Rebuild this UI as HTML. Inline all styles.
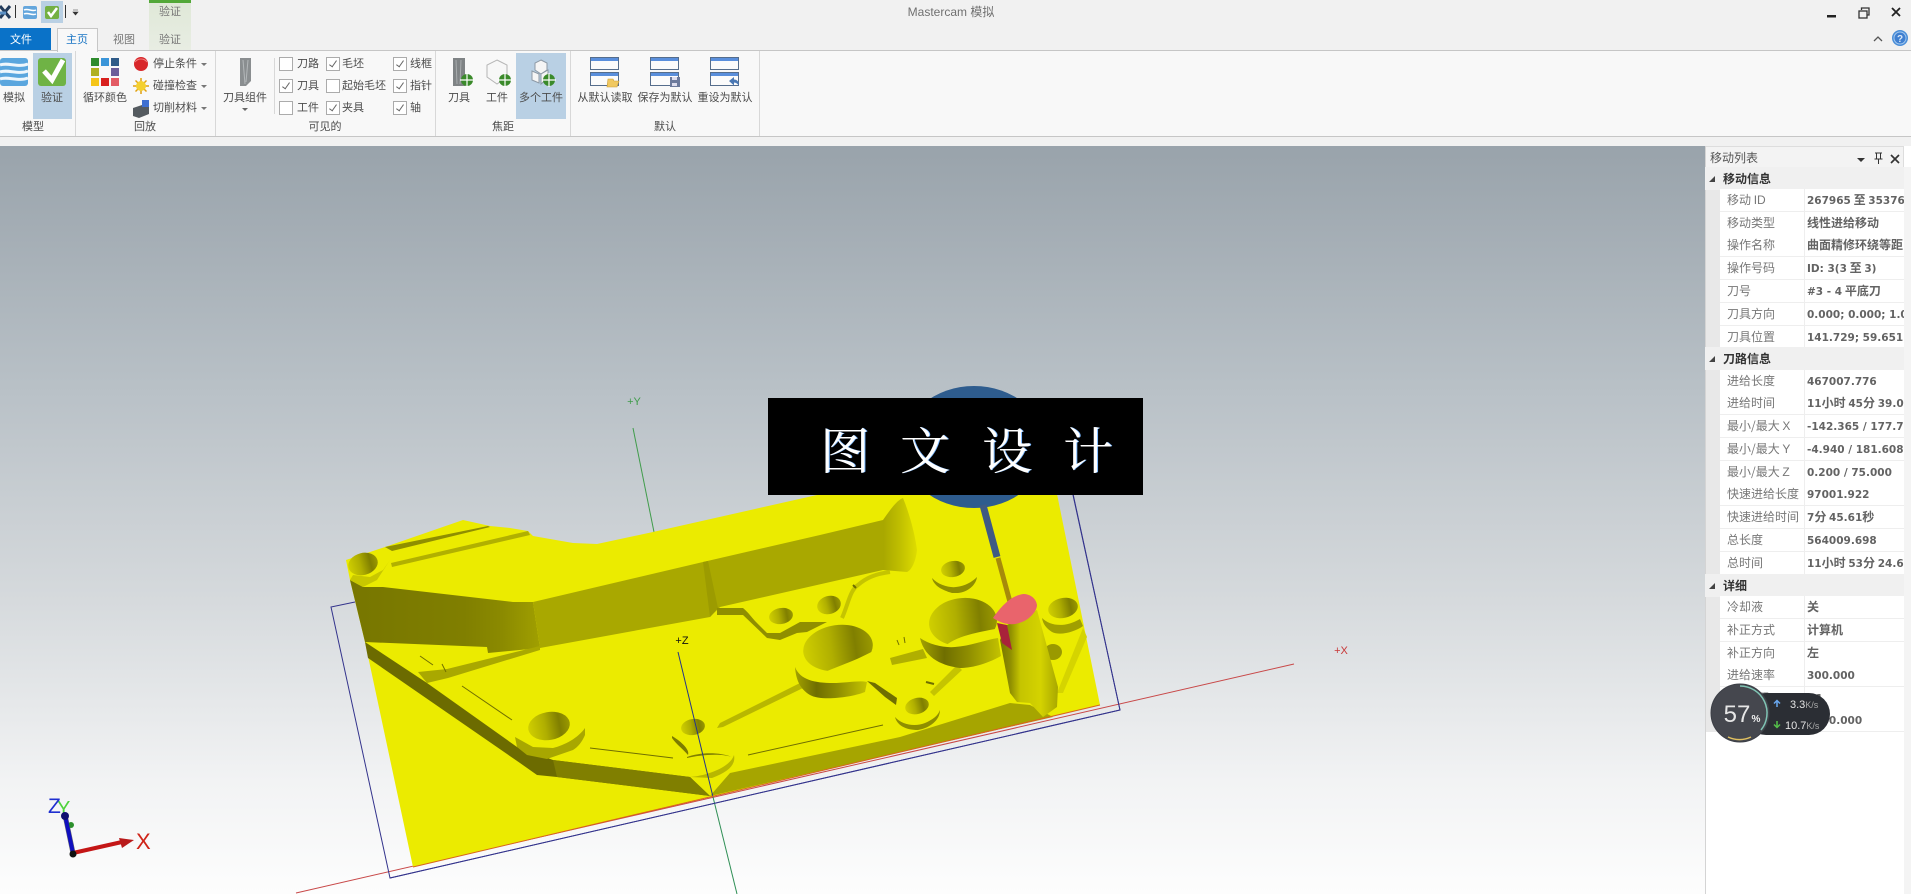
<!DOCTYPE html>
<html lang="zh"><head><meta charset="utf-8"><title>Mastercam 模拟</title>
<style>
html,body{margin:0;padding:0;width:1911px;height:894px;overflow:hidden;background:#f1f1f1}
body{position:relative;font:11px "Liberation Sans","Noto Sans CJK SC",sans-serif;color:#4a4a4a}
.a{position:absolute;white-space:nowrap}
.t{position:absolute;white-space:nowrap;transform:translate(-50%,-50%);font-size:11px;line-height:14px;color:#4c4c4c}
.l{position:absolute;white-space:nowrap;transform:translateY(-50%);font-size:11px;line-height:14px;color:#4c4c4c}
#ribbon{position:absolute;left:0;top:50px;width:1911px;height:87px;background:#f8f8f8;border-top:1px solid #c6c6c6;border-bottom:1px solid #c6c6c6;box-sizing:border-box}
.sep{position:absolute;width:1px;background:#d8d8d8}
.cb{position:absolute;width:12px;height:12px;border:1px solid #ababab;background:#fff;transform:translateY(-50%)}
.cb.c::after{content:"";position:absolute;left:4px;top:1px;width:3px;height:7px;border:solid #666;border-width:0 1.5px 1.5px 0;transform:rotate(35deg)}
#panel{position:absolute;left:1705px;top:146px;width:206px;height:748px;background:#fff}
.g{position:absolute;left:0;width:199px;height:23px;background:#f0f0f0;font:bold 12px/23px "Noto Sans CJK SC",sans-serif;color:#333;padding-left:18px;box-sizing:border-box}
.g::before{content:"";position:absolute;left:4px;top:9px;border-style:solid;border-width:0 0 6px 6px;border-color:transparent transparent #444 transparent}
.r{position:absolute;left:15px;width:184px;height:22px;background:#fff;border-bottom:1px solid #eee;overflow:hidden;white-space:nowrap;font-size:12px;line-height:22px}
.r s{position:absolute;left:7px;text-decoration:none;color:#777;font:12px/22px "Noto Sans CJK SC",sans-serif}
.r s i{font:12px "Liberation Sans",sans-serif;font-style:normal}
.r b{position:absolute;left:87px;color:#636363;font:bold 12px/22px "Noto Sans CJK SC",sans-serif}
.r b i{font:bold 10.5px "DejaVu Sans",sans-serif;font-style:normal}
.r::before{content:"";position:absolute;left:84px;top:0;width:1px;height:22px;background:#eee}
.wm{position:absolute;color:#fff;font:50px/50px "Noto Serif CJK SC","Liberation Serif",serif;text-shadow:1px 0 0 #7ab8ff}
</style></head><body>

<svg class="a" style="left:0;top:146px" width="1705" height="748" viewBox="0 146 1705 748">
<defs>
<linearGradient id="bg" x1="0" y1="0" x2="0" y2="1"><stop offset="0" stop-color="#99a3ab"/><stop offset=".33" stop-color="#b9c1c7"/><stop offset=".6" stop-color="#d5d9dc"/><stop offset=".85" stop-color="#f2f3f4"/><stop offset="1" stop-color="#fdfdfd"/></linearGradient>
<linearGradient id="h" x1="0" y1="0" x2="1" y2="0"><stop offset="0" stop-color="#d0cf00"/><stop offset=".4" stop-color="#b0af00"/><stop offset=".75" stop-color="#807f00"/><stop offset="1" stop-color="#9a9900"/></linearGradient>
<linearGradient id="p" x1="0" y1="0" x2="1" y2="0"><stop offset="0" stop-color="#777600"/><stop offset=".18" stop-color="#8f8e00"/><stop offset=".35" stop-color="#c5c400"/><stop offset=".7" stop-color="#d4d300"/><stop offset="1" stop-color="#a8a700"/></linearGradient>
<linearGradient id="w" x1="0" y1="0" x2="1" y2="0"><stop offset="0" stop-color="#a8a700"/><stop offset=".5" stop-color="#c0bf00"/><stop offset="1" stop-color="#dedd00"/></linearGradient>
<linearGradient id="a" x1="0" y1="0" x2="1" y2="0"><stop offset="0" stop-color="#777600"/><stop offset=".6" stop-color="#807f00"/><stop offset=".8" stop-color="#8b8a00"/><stop offset="1" stop-color="#a09f00"/></linearGradient>
<linearGradient id="c" x1="0" y1="0" x2="1" y2="0"><stop offset="0" stop-color="#a3a200"/><stop offset=".3" stop-color="#6f6e00"/><stop offset=".6" stop-color="#8f8e00"/><stop offset="1" stop-color="#c4c300"/></linearGradient>
</defs>
<rect x="0" y="146" width="1705" height="748" fill="url(#bg)"/>
<!-- axes behind -->
<line x1="633" y1="428" x2="654" y2="532" stroke="#3f9c4a" stroke-width="1"/>
<line x1="296" y1="893" x2="1294" y2="664" stroke="#c84848" stroke-width="1"/>
<line x1="713" y1="797" x2="737" y2="894" stroke="#2f8f55" stroke-width="1"/>
<!-- bbox -->
<polyline points="355,602 331,607 390,878 1120,710 1070,480" fill="none" stroke="#33338c" stroke-width="1"/>
<!-- plate -->
<polygon points="346,560 385,547 463,520 490,526 510,528 528,531 533,536 573,543 597,544 653,532 817,495 1047,445 1100,705 413,867 365,642 350,580" fill="#ebeb00"/>
<!-- holder -->
<ellipse cx="974" cy="447" rx="72" ry="61" fill="#2e5c8e"/>
<!-- top rails -->
<polygon points="385,547 392,551 490,527 488,526" fill="#8f8e00"/>
<polygon points="391,563 528,531 530,535 392,567" fill="#b1b000"/>
<!-- wall dark left -->
<polygon points="350,580 363,587 383,587 513,602 533,602 540,648 488,653 487,647 365,642" fill="url(#a)"/>
<!-- wall B -->
<polygon points="533,602 703,562 820,535 883,520 883,570 720,607 710,617 540,648" fill="#a9a800"/>
<path d="M883 520 C890 510,897 500,903 498 C910 515,915 535,917 550 C916 560,912 570,907 572 L883 570Z" fill="url(#w)"/>
<polygon points="703,562 708,561 718,608 710,617" fill="#9c9b00"/>
<!-- ribs -->
<polygon points="418,672 427,683 448,678 540,650 540,646 447,669" fill="#a9a800"/>
<path d="M717 608 L743 608 C748 612,752 618,757 623 L767 633 L780 633 L800 622 L827 622 L807 632 L797 633 L780 640 L767 638 L743 615 L717 615Z" fill="#8f8e00"/>
<path d="M842 618 C848 605,850 590,858 585 C866 578,875 574,890 572" fill="none" stroke="#c5c400" stroke-width="4"/>
<polygon points="720,723 800,683 803,688 723,727 717,728" fill="#b8b700"/>
<polygon points="890,658 923,649 927,658 892,665" fill="#b0af00"/>
<polygon points="930,692 957,665 962,670 934,696" fill="#c5c400"/>
<polygon points="1057,693 1083,628 1087,637 1063,693" fill="#d5d400"/>
<!-- bottom wall -->
<polygon points="365,642 427,683 517,747 553,760 690,777 710,796 557,777 537,775 520,763 368,658" fill="#6c6b00"/>
<polygon points="553,760 690,777 710,796 557,777" fill="#807f00"/>
<polygon points="710,796 730,773 900,737 1010,703 1030,705 1053,717" fill="#a6a500"/>
<!-- lower-left boss -->
<path d="M515 737 L533 747 L553 748 C565 745,578 738,585 728 L585 735 C582 742,578 747,573 750 L547 759 L527 755 L517 747Z" fill="#a8a700"/>
<ellipse cx="549" cy="726" rx="21" ry="14" fill="url(#h)" transform="rotate(-10 549 726)"/>
<!-- centre lobes -->
<ellipse cx="693" cy="727" rx="12" ry="8" fill="url(#h)" transform="rotate(-10 693 727)"/>
<path d="M672 738 C676 744,684 750,688 755 C690 750,682 742,672 736Z" fill="#7c7b00"/>
<path d="M687 757 C700 752,720 755,733 755 C736 765,725 775,712 777 L690 777 C686 770,686 762,687 757Z" fill="#ebeb00"/>
<path d="M687 757 C700 752,720 752,732 757 C720 753,700 755,687 758Z" fill="#807f00"/>
<path d="M690 777 C705 776,730 768,734 755 C736 765,728 772,712 778Z" fill="#b8b700"/>
<!-- top-left boss -->
<path d="M353 575 L370 577 L383 570 L390 560 L388 563 L377 580 L363 587 L350 580Z" fill="#c8c700"/>
<ellipse cx="363" cy="564" rx="15" ry="11" fill="url(#h)" transform="rotate(-15 363 564)"/>
<!-- top boss -->
<path d="M932 578 C938 585,950 588,956 587 C965 586,972 582,977 577 C976 585,968 592,958 593 L952 593 C942 590,934 586,932 578Z" fill="#8f8e00"/>
<ellipse cx="953" cy="569" rx="12" ry="8" fill="url(#h)" transform="rotate(-10 953 569)"/>
<!-- small holes -->
<ellipse cx="781" cy="616" rx="12" ry="8" fill="url(#h)" transform="rotate(-10 781 616)"/>
<ellipse cx="829" cy="605" rx="12" ry="9" fill="url(#h)" transform="rotate(-15 829 605)"/>
<!-- big boss 1 -->
<ellipse cx="838" cy="648" rx="35" ry="23" fill="url(#h)" transform="rotate(-8 838 648)"/>
<path d="M818 676 C830 668,850 664,875 650 L885 680 L818 690Z" fill="#ebeb00"/>
<path d="M795 667 C800 680,815 683,833 683 C845 683,860 680,867 682 L865 692 C850 698,820 701,810 695 C800 689,796 680,795 667Z" fill="url(#c)"/>
<polygon points="867,681 875,683 897,698 896,705 885,697" fill="#6f6e00"/>
<!-- big boss 2 -->
<ellipse cx="963" cy="622" rx="34" ry="24" fill="url(#h)" transform="rotate(-5 963 622)"/>
<path d="M943 648 C955 636,975 633,1000 628 L1002 660 L943 660Z" fill="#ebeb00"/>
<path d="M920 638 C930 645,945 648,955 647 C970 646,985 640,998 638 L1001 656 C985 665,970 668,960 668 C945 666,925 660,920 638Z" fill="url(#c)"/>
<!-- right boss -->
<path d="M1042 618 C1050 626,1065 628,1080 619 L1083 626 C1075 632,1060 636,1052 632 C1046 628,1043 624,1042 618Z" fill="#a09f00"/>
<ellipse cx="1063" cy="608" rx="15" ry="10" fill="url(#h)" transform="rotate(-12 1063 608)"/>
<ellipse cx="1053" cy="652" rx="9" ry="8" fill="#9a9900"/>
<!-- bottom small boss -->
<path d="M895 717 C902 725,915 727,925 723 C932 720,938 716,940 710 C940 720,930 728,918 730 C905 730,897 725,895 717Z" fill="#8f8e00"/>
<ellipse cx="917" cy="706" rx="12" ry="8" fill="url(#h)" transform="rotate(-15 917 706)"/>
<!-- small cuts -->
<g stroke="#6f6e00" stroke-width="1" fill="none">
<line x1="420" y1="656" x2="433" y2="665"/><line x1="442" y1="664" x2="446" y2="672"/>
<line x1="462" y1="686" x2="512" y2="720"/><line x1="590" y1="748" x2="673" y2="758"/>
<line x1="748" y1="755" x2="883" y2="725"/>
<line x1="897" y1="640" x2="899" y2="645"/><line x1="904" y1="637" x2="905" y2="643"/>
<line x1="926" y1="682" x2="934" y2="684" stroke-width="2"/><line x1="853" y1="585" x2="856" y2="588" stroke-width="2"/>
</g>
<!-- post -->
<polygon points="1000,640 1007,625 1037,610 1058,687 1057,707 1043,717 1030,703 1017,702 1010,693" fill="url(#p)"/>
<polygon points="997,623 1007,625 1012,650 1002,643" fill="#a8233a"/>
<!-- tool -->
<line x1="983" y1="505" x2="997" y2="557" stroke="#3f5a83" stroke-width="7"/>
<line x1="998" y1="558" x2="1010" y2="602" stroke="#a68a0a" stroke-width="5"/>
<path d="M993 618 C1000 608,1010 596,1023 594 C1030 594,1036 598,1037 605 C1037 612,1028 620,1022 622 C1015 625,1005 626,993 618Z" fill="#e9646c"/>
<!-- over-yellow lines -->
<line x1="678" y1="652" x2="713" y2="797" stroke="#24358a" stroke-width="1"/>
<line x1="413" y1="867" x2="1100" y2="705" stroke="#d8641c" stroke-width="1"/>
<polyline points="390,878 1120,710 1073,495" fill="none" stroke="#33338c" stroke-width="1"/>
<!-- labels -->
<text x="634" y="405" font-family="Liberation Sans" font-size="11" fill="#3f9c4a" text-anchor="middle">+Y</text>
<text x="682" y="644" font-family="Liberation Sans" font-size="11" fill="#111" text-anchor="middle">+Z</text>
<text x="1341" y="654" font-family="Liberation Sans" font-size="11" fill="#c83838" text-anchor="middle">+X</text>
<!-- triad -->
<line x1="73" y1="853" x2="65" y2="815" stroke="#6c6c6c" stroke-width="5"/>
<text x="57" y="815" font-family="Liberation Sans" font-size="20" fill="#4fd33c">Y</text>
<circle cx="71" cy="825" r="3" fill="#2c8f2c"/>
<line x1="73" y1="853" x2="122" y2="842" stroke="#c41616" stroke-width="4"/>
<polygon points="119,838 134,840 122,848" fill="#b81a1a"/>
<line x1="73" y1="853" x2="65" y2="815" stroke="#0f0fbf" stroke-width="4"/>
<circle cx="65" cy="816" r="4" fill="#101070"/>
<circle cx="73" cy="854" r="3.5" fill="#111"/>
<text x="48" y="813" font-family="Liberation Sans" font-size="21" fill="#1f2fd0">Z</text>
<text x="136" y="849" font-family="Liberation Sans" font-size="22" fill="#cf2418">X</text>
</svg>

<!-- watermark -->
<div class="a" style="left:768px;top:398px;width:375px;height:97px;background:#000"></div>
<div class="wm" style="left:820px;top:423px">图</div>
<div class="wm" style="left:900px;top:423px">文</div>
<div class="wm" style="left:982px;top:423px">设</div>
<div class="wm" style="left:1063px;top:423px">计</div>

<!-- panel -->
<div id="panel">
<div class="a" style="left:0;top:0;width:199px;height:21px;background:#f3f3f3;border:1px solid #ddd;border-bottom:0;box-sizing:border-box"></div>
<div class="a" style="left:5px;top:4px;font:12px/16px 'Noto Sans CJK SC',sans-serif;color:#555">移动列表</div>
<div class="a" style="left:0;top:0;width:1px;height:748px;background:#d4d4d4"></div>
<div class="a" style="left:199px;top:21px;width:7px;height:727px;background:#f4f4f4"></div>
<div class="a" style="left:1px;top:42px;width:14px;height:544px;background:#e8e8e8"></div>
<svg class="a" style="left:150px;top:5px" width="50" height="16"><polygon points="2,7 10,7 6,11" fill="#333"/><path d="M20 2h7M21.500 2v6h4V2M19.500 8h8M23.500 8v5" stroke="#333" fill="none"/><path d="M36 4l8 8M44 4l-8 8" stroke="#333" stroke-width="1.700"/></svg>

<div class="g" style="top:21px">移动信息</div>
<div class="r" style="top:43px"><s>移动 <i>ID</i></s><b><i>267965</i> 至 <i>353767</i></b></div>
<div class="r" style="top:66px"><s>移动类型</s><b>线性进给移动</b></div>
<div class="r" style="top:88px"><s>操作名称</s><b>曲面精修环绕等距</b></div>
<div class="r" style="top:111px"><s>操作号码</s><b><i>ID: 3(3</i> 至 <i>3)</i></b></div>
<div class="r" style="top:134px"><s>刀号</s><b><i>#3 - 4</i> 平底刀</b></div>
<div class="r" style="top:157px"><s>刀具方向</s><b><i>0.000; 0.000; 1.000</i></b></div>
<div class="r" style="top:180px"><s>刀具位置</s><b><i>141.729; 59.651; 0</i></b></div>

<div class="g" style="top:201px">刀路信息</div>
<div class="r" style="top:224px"><s>进给长度</s><b><i>467007.776</i></b></div>
<div class="r" style="top:246px"><s>进给时间</s><b><i>11</i>小时 <i>45</i>分 <i>39.00</i></b></div>
<div class="r" style="top:269px"><s>最小/最大 <i>X</i></s><b><i>-142.365 / 177.735</i></b></div>
<div class="r" style="top:292px"><s>最小/最大 <i>Y</i></s><b><i>-4.940 / 181.608</i></b></div>
<div class="r" style="top:315px"><s>最小/最大 <i>Z</i></s><b><i>0.200 / 75.000</i></b></div>
<div class="r" style="top:337px"><s>快速进给长度</s><b><i>97001.922</i></b></div>
<div class="r" style="top:360px"><s>快速进给时间</s><b><i>7</i>分 <i>45.61</i>秒</b></div>
<div class="r" style="top:383px"><s>总长度</s><b><i>564009.698</i></b></div>
<div class="r" style="top:406px"><s>总时间</s><b><i>11</i>小时 <i>53</i>分 <i>24.60</i></b></div>

<div class="g" style="top:428px">详细</div>
<div class="r" style="top:450px"><s>冷却液</s><b>关</b></div>
<div class="r" style="top:473px"><s>补正方式</s><b>计算机</b></div>
<div class="r" style="top:496px"><s>补正方向</s><b>左</b></div>
<div class="r" style="top:518px"><s>进给速率</s><b><i>300.000</i></b></div>
<div class="r" style="top:541px"><s>NC 代码</s><b><i>G1</i></b></div>
<div class="r" style="top:563px"><s>主轴转速</s><b><i>2500.000</i></b></div>
</div>

<!-- speed widget -->
<div class="a" style="left:1745px;top:693px;width:85px;height:42px;border-radius:21px;background:#2b2e34"></div>
<svg class="a" style="left:1709px;top:682px" width="62" height="62">
<circle cx="31" cy="31" r="29" fill="#45474e"/><circle cx="31" cy="31" r="29" fill="none" stroke="#3c3f46" stroke-width="1"/>
<path d="M31 4 A27 27 0 0 1 52 48" fill="none" stroke="#7fc4b4" stroke-width="1.500"/>
<path d="M19 55 A27 27 0 0 0 42 55" fill="none" stroke="#e0c060" stroke-width="1.500"/>
<text x="28" y="40" font-family="Liberation Sans" font-size="24" fill="#e6e6e6" text-anchor="middle">57</text>
<text x="47" y="40" font-family="Liberation Sans" font-size="10" font-weight="bold" fill="#f2f2f2" text-anchor="middle">%</text>
</svg>
<svg class="a" style="left:1770px;top:693px" width="60" height="42">
<path d="M7 14V8M4 10.500l3-3 3 3" stroke="#6aa8f0" stroke-width="1.500" fill="none"/>
<path d="M7 28v6M4 31.500l3 3 3-3" stroke="#55c04a" stroke-width="1.500" fill="none"/>
<text x="20" y="15" font-family="Liberation Sans" font-size="11" fill="#e4e4e4">3.3<tspan fill="#aaa" font-size="9">K/s</tspan></text>
<text x="15" y="36" font-family="Liberation Sans" font-size="11" fill="#e4e4e4">10.7<tspan fill="#aaa" font-size="9">K/s</tspan></text>
</svg>

<!-- title bar -->
<div class="t" style="left:951px;top:12px;font-size:12px;color:#707070">Mastercam 模拟</div>
<svg class="a" style="left:0;top:0" width="90" height="28">
<path d="M0 6l10 12M10 6L0 18" stroke="#233c5c" stroke-width="3"/><path d="M0 13h6" stroke="#5a8fc4" stroke-width="3"/>
<rect x="15" y="5" width="1" height="13" fill="#333"/>
<rect x="23" y="6" width="14" height="13" rx="2" fill="#64a6dc"/><path d="M24 10c4-2 8 2 12 0M24 14c4-2 8 2 12 0" stroke="#fff" stroke-width="1.500" fill="none"/>
<rect x="41" y="1" width="22" height="22" fill="#b9d0e4"/>
<rect x="45" y="6" width="14" height="13" rx="2" fill="#74b043"/><path d="M48 12l3 4 6-8" stroke="#fff" stroke-width="2.500" fill="none"/>
<rect x="65" y="5" width="1" height="13" fill="#333"/>
<path d="M73 10h5M73 12h5l-2.500 3z" fill="#333" stroke="#333" stroke-width=".6"/>
</svg>

<!-- context tab -->
<div class="a" style="left:149px;top:0;width:42px;height:50px;background:linear-gradient(#dfe8d7,#e8ede3)"></div>
<div class="a" style="left:149px;top:0;width:42px;height:3px;background:#52a838"></div>
<div class="t" style="left:170px;top:12px;color:#777">验证</div>
<div class="t" style="left:170px;top:40px;color:#777">验证</div>

<!-- tabs -->
<div class="a" style="left:0;top:28px;width:51px;height:22px;background:#0a72c8"></div>
<div class="t" style="left:21px;top:40px;color:#fff">文件</div>
<div class="t" style="left:124px;top:40px;color:#777">视图</div>

<div id="ribbon"></div>
<div class="a" style="left:57px;top:28px;width:41px;height:24px;background:#f8f8f8;border:1px solid #c6c6c6;border-bottom:0;box-sizing:border-box"></div>
<div class="t" style="left:77px;top:40px;color:#1a75c4">主页</div>

<!-- highlights -->
<div class="a" style="left:33px;top:53px;width:39px;height:66px;background:#b9d0e4"></div>
<div class="a" style="left:516px;top:53px;width:50px;height:66px;background:#b9d0e4"></div>
<div class="sep" style="left:75px;top:51px;height:85px"></div>
<div class="sep" style="left:215px;top:51px;height:85px"></div>
<div class="sep" style="left:274px;top:58px;height:56px"></div>
<div class="sep" style="left:435px;top:51px;height:85px"></div>
<div class="sep" style="left:570px;top:51px;height:85px"></div>
<div class="sep" style="left:759px;top:51px;height:85px"></div>

<!-- ribbon icons -->
<svg class="a" style="left:0;top:50px" width="770" height="70" viewBox="0 50 770 70">
<rect x="0" y="58" width="28" height="28" rx="3" fill="#5aa6de"/><path d="M0 65c8-3 18 3 28-1M0 72c8-3 18 3 28-1M0 79c8-3 18 3 28-1" stroke="#eef6fc" stroke-width="3" fill="none"/>
<rect x="38" y="58" width="28" height="28" rx="3" fill="#6fb345"/><path d="M44 71l8 9 11-20" stroke="#fff" stroke-width="5" fill="none"/>
<g>
<rect x="91" y="58" width="8" height="8" fill="#2e8b2e"/><rect x="101" y="58" width="8" height="8" fill="#3a95d8"/><rect x="111" y="58" width="8" height="8" fill="#2f5b88"/>
<rect x="91" y="68" width="8" height="8" fill="#b0b020"/><rect x="111" y="68" width="8" height="8" fill="#6a5d9a"/>
<rect x="91" y="78" width="8" height="8" fill="#f5c518"/><rect x="101" y="78" width="8" height="8" fill="#d8201e"/><rect x="111" y="78" width="8" height="8" fill="#e35b64"/>
</g>
<circle cx="141" cy="64" r="7" fill="#d8272a"/><path d="M135 62c3-4 9-4 12 0" stroke="#f08080" fill="none"/>
<g stroke="#e0a010" stroke-width="1.500"><path d="M141 78v16M133 86h16M135.500 80.500l11 11M146.500 80.500l-11 11"/></g><circle cx="141" cy="86" r="5" fill="#f4d030"/>
<polygon points="133,108 145,104 149,106 149,114 139,118 133,116" fill="#555b60"/><rect x="142" y="100" width="7" height="7" fill="#3f6fd0"/>
<path d="M201 63h6l-3 3zM201 85h6l-3 3zM201 107h6l-3 3z" fill="#777"/>
<path d="M240 58h11v23l-5 5h-6z" fill="#8a8e90"/><path d="M243 60l2 24M248 60l-2 22" stroke="#b4b8ba"/>
<path d="M242 108h6l-3 3z" fill="#666"/>
<!-- focus icons -->
<path d="M453 58h12v28h-12z" fill="#7f8385"/><path d="M456 60l1 24M461 60l-1 24" stroke="#a8acae"/>
<circle cx="467" cy="80" r="6" fill="#3a8a2a"/><path d="M467 73v14M460 80h14" stroke="#fff" stroke-width="1.200"/>
<polygon points="497,60 507,65 507,77 497,84 487,77 487,65" fill="#f7f7f7" stroke="#b5b5b5"/>
<circle cx="505" cy="80" r="6" fill="#3a8a2a"/><path d="M505 73v14M498 80h14" stroke="#fff" stroke-width="1.200"/>
<polygon points="541,60 547,63 547,70 541,74 535,70 535,63" fill="#f5f5f5" stroke="#8d99a5"/>
<polygon points="532,71 539,74 539,83 532,80" fill="#f5f5f5" stroke="#8d99a5"/>
<polygon points="541,74 548,70 548,78 541,84" fill="#f5f5f5" stroke="#8d99a5"/>
<circle cx="549" cy="80" r="6" fill="#3a8a2a"/><path d="M549 73v14M542 80h14" stroke="#fff" stroke-width="1.200"/>
<!-- defaults -->
<g fill="#fbfbfb" stroke="#556d8c">
<rect x="590.500" y="57.500" width="28" height="12"/><rect x="590.500" y="72.500" width="28" height="13"/>
<rect x="650.500" y="57.500" width="28" height="12"/><rect x="650.500" y="72.500" width="28" height="13"/>
<rect x="710.500" y="57.500" width="28" height="12"/><rect x="710.500" y="72.500" width="28" height="13"/>
</g>
<g fill="#5a8fdc"><rect x="591" y="58" width="27" height="3"/><rect x="591" y="73" width="27" height="3"/><rect x="651" y="58" width="27" height="3"/><rect x="651" y="73" width="27" height="3"/><rect x="711" y="58" width="27" height="3"/><rect x="711" y="73" width="27" height="3"/></g>
<path d="M608 79h5l1 2h5l-2 6h-10z" fill="#f0c860" stroke="#c89c38" stroke-width=".6"/>
<rect x="670" y="77" width="10" height="10" fill="#6c7a9c"/><rect x="672" y="77" width="5" height="3" fill="#dde"/><rect x="672" y="83" width="5" height="3" fill="#dde"/>
<path d="M729 81l5-4v2.500c3 0 5 2 5 6-2-2-3-3-5-3v3z" fill="#4a78b4"/>
</svg>

<!-- labels -->
<div class="t" style="left:14px;top:98px">模拟</div>
<div class="t" style="left:52px;top:98px">验证</div>
<div class="t" style="left:105px;top:98px">循环颜色</div>
<div class="l" style="left:153px;top:64px">停止条件</div>
<div class="l" style="left:153px;top:86px">碰撞检查</div>
<div class="l" style="left:153px;top:108px">切削材料</div>
<div class="t" style="left:245px;top:98px">刀具组件</div>

<div class="cb" style="left:279px;top:64px"></div><div class="l" style="left:297px;top:64px">刀路</div>
<div class="cb c" style="left:279px;top:86px"></div><div class="l" style="left:297px;top:86px">刀具</div>
<div class="cb" style="left:279px;top:108px"></div><div class="l" style="left:297px;top:108px">工件</div>
<div class="cb c" style="left:326px;top:64px"></div><div class="l" style="left:342px;top:64px">毛坯</div>
<div class="cb" style="left:326px;top:86px"></div><div class="l" style="left:342px;top:86px">起始毛坯</div>
<div class="cb c" style="left:326px;top:108px"></div><div class="l" style="left:342px;top:108px">夹具</div>
<div class="cb c" style="left:393px;top:64px"></div><div class="l" style="left:410px;top:64px">线框</div>
<div class="cb c" style="left:393px;top:86px"></div><div class="l" style="left:410px;top:86px">指针</div>
<div class="cb c" style="left:393px;top:108px"></div><div class="l" style="left:410px;top:108px">轴</div>

<div class="t" style="left:459px;top:98px">刀具</div>
<div class="t" style="left:497px;top:98px">工件</div>
<div class="t" style="left:541px;top:98px">多个工件</div>
<div class="t" style="left:605px;top:98px">从默认读取</div>
<div class="t" style="left:665px;top:98px">保存为默认</div>
<div class="t" style="left:725px;top:98px">重设为默认</div>

<div class="t" style="left:33px;top:127px">模型</div>
<div class="t" style="left:145px;top:127px">回放</div>
<div class="t" style="left:325px;top:127px">可见的</div>
<div class="t" style="left:503px;top:127px">焦距</div>
<div class="t" style="left:665px;top:127px">默认</div>

<!-- window controls -->
<svg class="a" style="left:1820px;top:0" width="91" height="50">
<rect x="7" y="15" width="9" height="2.500" fill="#222"/>
<rect x="39" y="11" width="8" height="7" fill="none" stroke="#333" stroke-width="1.300"/><path d="M41.500 10V8h7.500v7h-2" fill="none" stroke="#333" stroke-width="1.300"/>
<path d="M72 8l8 8M80 8l-8 8" stroke="#222" stroke-width="1.800"/>
<path d="M54 41l4-4 4 4" fill="none" stroke="#555" stroke-width="1.300"/>
<circle cx="80" cy="38" r="8" fill="#4a8ed8"/><circle cx="80" cy="38" r="6" fill="#3f7fd0" stroke="#a4c8ee"/><text x="80" y="42" font-family="Liberation Sans" font-size="10" font-weight="bold" fill="#dbe9f8" text-anchor="middle">?</text>
</svg>
</body></html>
